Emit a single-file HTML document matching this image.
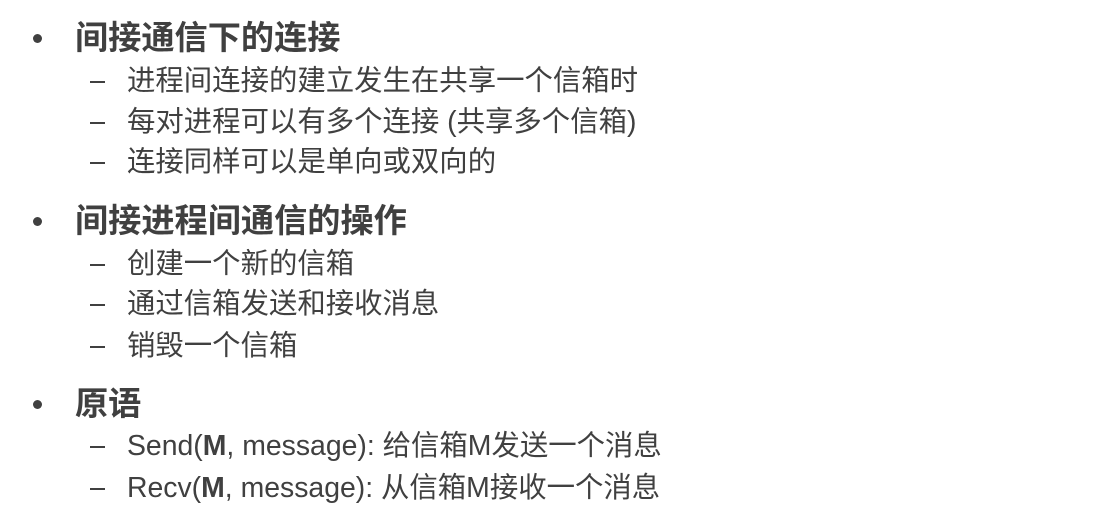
<!DOCTYPE html>
<html><head><meta charset="utf-8"><style>
body{margin:0;width:1104px;height:524px;background:#fff;position:relative;overflow:hidden;color:#404040;font-family:"Liberation Sans","Noto Sans CJK SC",sans-serif}
.l{position:absolute;white-space:nowrap;line-height:40px;height:40px}
.h{font-size:33.2px;font-weight:bold;left:75px}
.s{font-size:28.4px;left:127px}
.b{position:absolute;width:9px;height:9px;border-radius:50%;background:#404040;left:33px}
.d{position:absolute;width:15px;height:2px;background:#404040;left:90px}
</style></head><body>
<div class="b" style="top:34px"></div><div class="l h" style="top:19px">间接通信下的连接</div>
<div class="d" style="top:81px"></div><div class="l s" style="top:61px">进程间连接的建立发生在共享一个信箱时</div>
<div class="d" style="top:122px"></div><div class="l s" style="top:102px">每对进程可以有多个连接 (共享多个信箱)</div>
<div class="d" style="top:162px"></div><div class="l s" style="top:142px">连接同样可以是单向或双向的</div>
<div class="b" style="top:217px"></div><div class="l h" style="top:202px">间接进程间通信的操作</div>
<div class="d" style="top:264px"></div><div class="l s" style="top:244px">创建一个新的信箱</div>
<div class="d" style="top:304px"></div><div class="l s" style="top:284px">通过信箱发送和接收消息</div>
<div class="d" style="top:346px"></div><div class="l s" style="top:326px">销毁一个信箱</div>
<div class="b" style="top:400px"></div><div class="l h" style="top:385px">原语</div>
<div class="d" style="top:446px"></div><div class="l s" style="top:426px">Send(<b>M</b>, message): 给信箱M发送一个消息</div>
<div class="d" style="top:488px"></div><div class="l s" style="top:468px">Recv(<b>M</b>, message): 从信箱M接收一个消息</div>
</body></html>
